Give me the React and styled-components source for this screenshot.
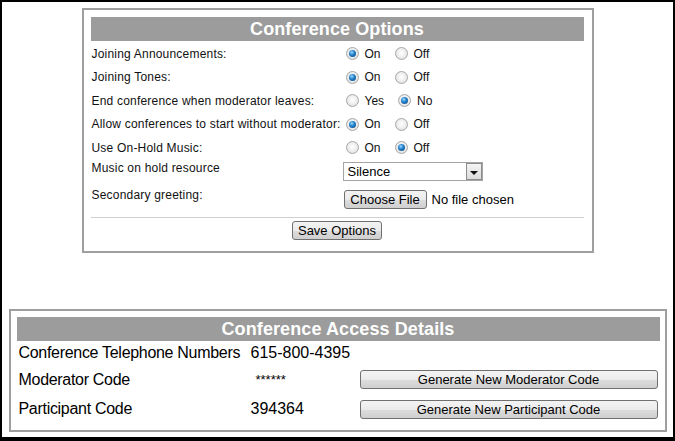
import React from "react";
import styled, { createGlobalStyle } from "styled-components";

const FONT = `"Liberation Sans", Arial, sans-serif`;

const GlobalStyle = createGlobalStyle`
  html, body {
    margin: 0;
    padding: 0;
    background: #fff;
  }
  body {
    font-family: ${FONT};
    color: #000;
  }
`;

const options = [
  { label: "Joining Announcements:", choices: ["On", "Off"], value: "On" },
  { label: "Joining Tones:", choices: ["On", "Off"], value: "On" },
  { label: "End conference when moderator leaves:", choices: ["Yes", "No"], value: "No" },
  { label: "Allow conferences to start without moderator:", choices: ["On", "Off"], value: "On" },
  { label: "Use On-Hold Music:", choices: ["On", "Off"], value: "Off" },
];

const access = [
  { label: "Conference Telephone Numbers", value: "615-800-4395", h: 24 },
  { label: "Moderator Code", value: "******", masked: true, action: "Generate New Moderator Code", h: 29 },
  { label: "Participant Code", value: "394364", action: "Generate New Participant Code", h: 30 },
];

const App = () => (
  <>
    <GlobalStyle />
    <Frame>
      <Panel $width={512} $top={6} $pad="7px 8px 11px 7px">
        <Header $gap={1}>Conference Options</Header>
        {options.map((o) => (
          <OptionRow key={o.label} $h={23.5} $align="center">
            <Label>{o.label}</Label>
            <Choices>
              {o.choices.map((c) => (
                <Choice key={c}>
                  <Radio $on={c === o.value} />
                  {c}
                </Choice>
              ))}
            </Choices>
          </OptionRow>
        ))}
        <OptionRow $h={24} $align="start">
          <Label $pt={1.5}>Music on hold resource</Label>
          <Control $pt={2.5}>
            <Select>
              <span>Silence</span>
              <Arrow />
            </Select>
          </Control>
        </OptionRow>
        <OptionRow $h={29.5} $align="start">
          <Label $pt={4.5}>Secondary greeting:</Label>
          <Control $pt={6.5}>
            <FileRow>
              <Button $w={83}>Choose File</Button>
              <span>No file chosen</span>
            </FileRow>
          </Control>
        </OptionRow>
        <Rule />
        <Footer>
          <Button $w={90}>Save Options</Button>
        </Footer>
      </Panel>

      <Panel $width={658} $top={56} $pad="6px 5px 6px 6px">
        <Header>Conference Access Details</Header>
        {access.map((a) => (
          <AccessRow key={a.label} $h={a.h}>
            <AccessLabel>{a.label}</AccessLabel>
            <AccessValue $masked={a.masked}>{a.value}</AccessValue>
            <div>{a.action && <Button $w={298}>{a.action}</Button>}</div>
          </AccessRow>
        ))}
      </Panel>
    </Frame>
  </>
);

const Frame = styled.div`
  box-sizing: border-box;
  width: 675px;
  height: 441px;
  border: 2px solid #000;
  border-bottom-width: 4px;
  background: #fff;
  display: flex;
  flex-direction: column;
  align-items: center;
`;

const Panel = styled.section`
  box-sizing: border-box;
  width: ${(p) => p.$width}px;
  margin-top: ${(p) => p.$top}px;
  padding: ${(p) => p.$pad};
  border: 2px solid #9f9f9f;
  background: #fff;
`;

const Header = styled.h2`
  margin: 0 0 ${(p) => p.$gap || 0}px;
  height: 24px;
  background: #9c9c9c;
  color: #fff;
  font: bold 18px/24px ${FONT};
  letter-spacing: 0.1px;
  text-align: center;
`;

const OptionRow = styled.div`
  display: grid;
  grid-template-columns: 252px 1fr;
  height: ${(p) => p.$h}px;
  align-items: ${(p) => p.$align};
`;

const Label = styled.div`
  padding-left: 1px;
  padding-top: ${(p) => p.$pt || 0}px;
  font-size: 12px;
  line-height: 14px;
  letter-spacing: 0.2px;
  color: #111;
  white-space: nowrap;
`;

const Choices = styled.div`
  display: flex;
  align-items: center;
  gap: 14px;
  padding-left: 3px;
`;

const Choice = styled.label`
  display: inline-flex;
  align-items: center;
  gap: 6px;
  font-size: 12px;
  color: #111;
`;

const Radio = styled.span`
  box-sizing: border-box;
  width: 13px;
  height: 13px;
  border-radius: 50%;
  border: 1px solid #a7a7a7;
  background: radial-gradient(circle at 50% 45%, #ffffff 0%, #ececec 55%, #d2d2d2 100%);
  display: inline-flex;
  align-items: center;
  justify-content: center;

  &::after {
    content: "";
    display: ${(p) => (p.$on ? "block" : "none")};
    width: 7px;
    height: 7px;
    border-radius: 50%;
    background: radial-gradient(circle at 40% 35%, #9fdcff 0%, #2482cc 40%, #083f78 100%);
  }
`;

const Control = styled.div`
  padding-top: ${(p) => p.$pt || 0}px;
`;

const Select = styled.div`
  box-sizing: border-box;
  width: 140px;
  height: 19px;
  border: 1px solid #a5a5a5;
  background: #fff;
  display: flex;
  align-items: center;
  justify-content: space-between;
  padding-left: 4px;
  font-size: 13px;
`;

const Arrow = styled.span`
  box-sizing: border-box;
  width: 16px;
  height: 17px;
  border: 1px solid #8c8c8c;
  background: linear-gradient(#f4f4f4, #dcdcdc);
  display: flex;
  align-items: center;
  justify-content: center;

  &::after {
    content: "";
    border-left: 4px solid transparent;
    border-right: 4px solid transparent;
    border-top: 4px solid #111;
    margin-top: 2px;
  }
`;

const FileRow = styled.div`
  display: flex;
  align-items: center;
  gap: 5px;
  padding-left: 1px;
  font-size: 13px;
`;

const Button = styled.button`
  box-sizing: border-box;
  width: ${(p) => (p.$w ? `${p.$w}px` : "auto")};
  height: 19px;
  padding: 0;
  border: 1px solid #707070;
  border-radius: 3px;
  background: linear-gradient(#f3f3f3, #ebebeb 50%, #dddddd 51%, #cfcfcf);
  font: 13px/17px ${FONT};
  color: #000;
  text-align: center;
`;

const Rule = styled.div`
  height: 1px;
  margin-top: 4px;
  background: #d0d0d0;
`;

const Footer = styled.div`
  display: flex;
  justify-content: center;
  padding-top: 3px;
`;

const AccessRow = styled.div`
  display: grid;
  grid-template-columns: 234px 109px 1fr;
  height: ${(p) => p.$h}px;
  align-items: center;
  font-size: 16px;
`;

const AccessLabel = styled.div`
  padding-left: 2px;
  white-space: nowrap;
  letter-spacing: -0.3px;
`;

const AccessValue = styled.div`
  padding-left: ${(p) => (p.$masked ? 5 : 0)}px;
  font-size: ${(p) => (p.$masked ? 13 : 16)}px;
`;

export default App;
